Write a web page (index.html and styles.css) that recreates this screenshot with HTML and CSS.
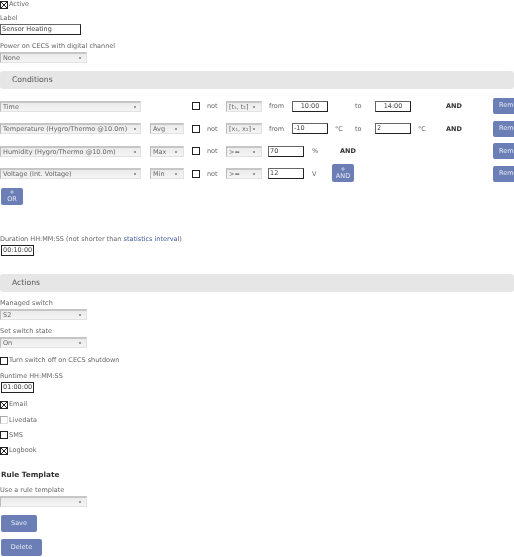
FILE: index.html
```html
<!DOCTYPE html>
<html>
<head>
<meta charset="utf-8">
<link rel="stylesheet" href="styles.css">
</head>
<body>
<div class="page">
  <label class="check-line top-check"><span class="cb checked"></span>Active</label>

  <div class="field f-label">
    <div class="lbl">Label</div>
    <div class="inp w81">Sensor Heating</div>
  </div>

  <div class="field f-power">
    <div class="lbl">Power on CECS with digital channel</div>
    <div class="sel w87 d6">None</div>
  </div>

  <div class="section-head h-cond">Conditions</div>

  <div class="conds">
    <div class="crow">
      <div class="sel w141 d5">Time</div>
      <div class="agg-empty"></div>
      <span class="cb"></span>
      <span class="txt not">not</span>
      <div class="sel w36 d7 op">[t₁, t₂]</div>
      <span class="txt from">from</span>
      <div class="inp w36 center">10:00</div>
      <span class="txt unit1"></span>
      <span class="txt to">to</span>
      <div class="inp w36 center">14:00</div>
      <span class="txt unit2"></span>
      <span class="and">AND</span>
      <span class="grow"></span>
      <button class="btn rem">Remove</button>
    </div>
    <div class="crow">
      <div class="sel w141 d5">Temperature (Hygro/Thermo @10.0m)</div>
      <div class="sel w34 d7 agg">Avg</div>
      <span class="cb"></span>
      <span class="txt not">not</span>
      <div class="sel w36 d7 op">[x₁, x₂]</div>
      <span class="txt from">from</span>
      <div class="inp w36">-10</div>
      <span class="txt unit1">°C</span>
      <span class="txt to">to</span>
      <div class="inp w36">2</div>
      <span class="txt unit2">°C</span>
      <span class="and">AND</span>
      <span class="grow"></span>
      <button class="btn rem">Remove</button>
    </div>
    <div class="crow">
      <div class="sel w141 d5">Humidity (Hygro/Thermo @10.0m)</div>
      <div class="sel w34 d7 agg">Max</div>
      <span class="cb"></span>
      <span class="txt not">not</span>
      <div class="sel w36 d7 op">&gt;=</div>
      <div class="inp w36 val">70</div>
      <span class="txt unit3">%</span>
      <span class="and">AND</span>
      <span class="grow"></span>
      <button class="btn rem">Remove</button>
    </div>
    <div class="crow">
      <div class="sel w141 d5">Voltage (Int. Voltage)</div>
      <div class="sel w34 d7 agg">Min</div>
      <span class="cb"></span>
      <span class="txt not">not</span>
      <div class="sel w36 d7 op">&gt;=</div>
      <div class="inp w36 val">12</div>
      <span class="txt unit4">V</span>
      <button class="btn add-and">+<br>AND</button>
      <span class="grow"></span>
      <button class="btn rem">Remove</button>
    </div>
  </div>

  <button class="btn add-or">+<br>OR</button>

  <div class="field f-duration">
    <div class="lbl">Duration HH:MM:SS (not shorter than <a class="link">statistics interval</a>)</div>
    <div class="inp w33 dark">00:10:00</div>
  </div>

  <div class="section-head h-act">Actions</div>

  <div class="field f-switch">
    <div class="lbl">Managed switch</div>
    <div class="sel w87 d6">S2</div>
  </div>

  <div class="field f-state">
    <div class="lbl">Set switch state</div>
    <div class="sel w87 d6">On</div>
  </div>

  <label class="check-line c-shutdown"><span class="cb"></span>Turn switch off on CECS shutdown</label>

  <div class="field f-runtime">
    <div class="lbl">Runtime HH:MM:SS</div>
    <div class="inp w33 dark">01:00:00</div>
  </div>

  <div class="checks">
    <label class="check-line"><span class="cb checked"></span>Email</label>
    <label class="check-line"><span class="cb light"></span>Livedata</label>
    <label class="check-line"><span class="cb"></span>SMS</label>
    <label class="check-line"><span class="cb checked"></span>Logbook</label>
  </div>

  <div class="rule-title">Rule Template</div>

  <div class="field f-template">
    <div class="lbl">Use a rule template</div>
    <div class="sel w87 d6"></div>
  </div>

  <button class="btn save">Save</button>
  <button class="btn delete">Delete</button>
</div>
</body>
</html>
```

FILE: styles.css
```css
html, body {
  margin: 0;
  padding: 0;
  background: #ffffff;
}
body {
  font-family: "DejaVu Sans", Verdana, sans-serif;
  font-size: 6.5px;
  color: #666;
  width: 514px;
  overflow: hidden;
}
.page {
  display: flex;
  flex-direction: column;
  align-items: flex-start;
  will-change: transform;
}
.check-line {
  display: flex;
  align-items: center;
  height: 9px;
  line-height: 9px;
  color: #666;
  white-space: nowrap;
}
.cb {
  box-sizing: border-box;
  width: 8px;
  height: 8px;
  border: 1px solid #222;
  background: #fff;
  margin-right: 1px;
  flex: none;
}
.cb.checked {
  background:
    linear-gradient(45deg, transparent 42%, #222 42%, #222 58%, transparent 58%),
    linear-gradient(-45deg, transparent 42%, #222 42%, #222 58%, transparent 58%),
    #fff;
}
.cb.light {
  border-color: #aaa;
  border-right-color: #e0e0e0;
  border-bottom-color: #e0e0e0;
}
.field {
  display: flex;
  flex-direction: column;
  align-items: flex-start;
}
.lbl {
  height: 8px;
  line-height: 8px;
  margin-bottom: 2px;
  color: #666;
  white-space: nowrap;
}
.f-label { margin-top: 5px; }
.f-power { margin-top: 7px; }
.inp {
  box-sizing: border-box;
  height: 11px;
  line-height: 9px;
  border: 1px solid #222;
  border-top-color: #666;
  border-left-color: #666;
  background: #fff;
  color: #444;
  padding: 0 1px;
  white-space: nowrap;
  overflow: hidden;
}
.inp.center { text-align: center; }
.inp.dark { border-color: #222; margin-left: 1px; padding: 0 1px; }
.sel {
  box-sizing: border-box;
  height: 11px;
  line-height: 9px;
  border: 1px solid #e2e2e2;
  border-top: 2px solid #c6c6c6;
  border-left: 1px solid #bbb;
  color: #666;
  padding: 0 10px 0 2px;
  white-space: nowrap;
  overflow: hidden;
  text-overflow: clip;
}
.sel.d5 {
  background:
    radial-gradient(circle at calc(100% - 5px) 50%, #999 0, #999 0.9px, transparent 1.3px),
    linear-gradient(#ebebeb, #f4f4f4);
}
.sel.d6 {
  background:
    radial-gradient(circle at calc(100% - 6px) 50%, #999 0, #999 0.9px, transparent 1.3px),
    linear-gradient(#ebebeb, #f4f4f4);
}
.sel.d7 {
  padding-right: 8px;
  background:
    radial-gradient(circle at calc(100% - 7px) 50%, #999 0, #999 0.9px, transparent 1.3px),
    linear-gradient(#ebebeb, #f4f4f4);
}
.w81 { width: 81px; }
.w87 { width: 87px; }
.w141 { width: 141px; }
.w36 { width: 36px; }
.w34 { width: 34px; }
.w33 { width: 33px; }
.section-head {
  box-sizing: border-box;
  width: 514px;
  height: 18px;
  line-height: 18px;
  background: #e6e6e6;
  border-radius: 3px;
  padding-left: 12px;
  font-size: 7.7px;
  color: #555;
}
.h-cond { margin-top: 8px; }
.conds {
  margin-top: 9px;
  display: flex;
  flex-direction: column;
  gap: 6.67px;
  width: 514px;
}
.crow {
  display: flex;
  align-items: center;
  height: 16px;
  white-space: nowrap;
}
.agg-empty { width: 34px; margin-left: 9px; flex: none; }
.agg { margin-left: 9px; }
.crow .cb { margin-left: 8px; margin-right: 0; }
.txt { color: #666; flex: none; }
.not { margin-left: 7px; width: 19px; }
.op { margin-left: 0; }
.from { margin-left: 7px; width: 23px; }
.unit1 { margin-left: 7px; width: 20px; }
.to { width: 20px; }
.unit2 { margin-left: 7px; width: 28px; }
.and { font-weight: bold; color: #333; flex: none; }
.val { margin-left: 6px; }
.unit3 { margin-left: 8px; width: 28px; }
.unit4 { margin-left: 8px; width: 20px; }
.grow { flex: 1; }
.btn {
  box-sizing: border-box;
  border: none;
  background: #6b7eb5;
  color: #e6eaf4;
  font-family: "DejaVu Sans", Verdana, sans-serif;
  font-size: 6.5px;
  border-radius: 2px;
  padding: 0;
  line-height: 7.5px;
  text-align: center;
  flex: none;
}
.rem {
  width: 30px;
  height: 16px;
  text-align: left;
  padding-left: 6px;
  margin-right: -9px;
  overflow: hidden;
  white-space: nowrap;
}
.add-and {
  width: 22px;
  height: 18px;
  margin-top: -1px;
}
.add-or {
  width: 22px;
  height: 17px;
  margin-left: 1px;
  margin-top: 6px;
}
.f-duration { margin-top: 30px; }
.link { color: #41589a; }
.h-act { margin-top: 18px; }
.f-switch { margin-top: 7px; }
.f-state { margin-top: 7px; }
.c-shutdown { margin-top: 8.5px; }
.f-runtime { margin-top: 6.5px; }
.checks {
  margin-top: 7.5px;
  display: flex;
  flex-direction: column;
  gap: 6.2px;
}
.rule-title {
  margin-top: 15px;
  font-weight: bold;
  font-size: 7.3px;
  color: #333;
  height: 9px;
  line-height: 9px;
  margin-left: 1px;
}
.f-template { margin-top: 7px; }
.save {
  width: 36px;
  height: 17px;
  margin-left: 1px;
  margin-top: 8px;
}
.delete {
  width: 41px;
  height: 17px;
  margin-left: 1px;
  margin-top: 7px;
}
```
